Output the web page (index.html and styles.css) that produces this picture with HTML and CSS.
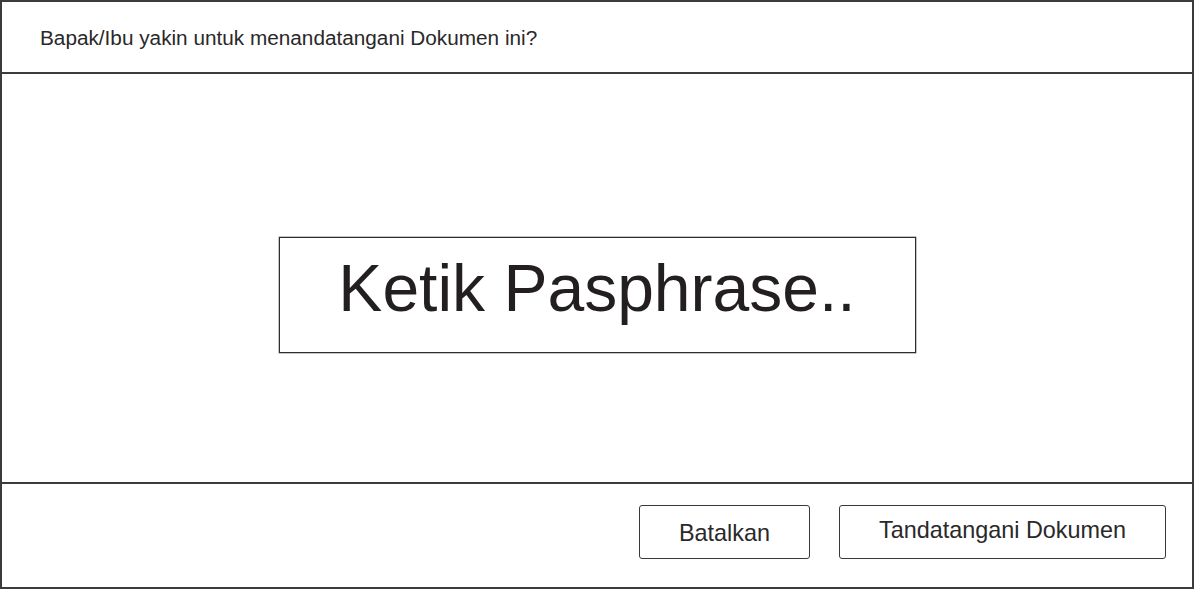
FILE: index.html
```html
<!DOCTYPE html>
<html lang="id">
<head>
<meta charset="utf-8">
<title>Tandatangani Dokumen</title>
<link rel="stylesheet" href="styles.css">
</head>
<body>
<div class="dialog">
  <div class="dialog-header">Bapak/Ibu yakin untuk menandatangani Dokumen ini?</div>
  <div class="dialog-body">
    <div class="pass-box">Ketik Pasphrase..</div>
  </div>
  <div class="dialog-footer">
    <button class="btn btn-cancel">Batalkan</button>
    <button class="btn btn-sign">Tandatangani Dokumen</button>
  </div>
</div>
</body>
</html>
```

FILE: styles.css
```css
html, body {
  margin: 0;
  padding: 0;
  background: #ffffff;
}

body {
  font-family: "Liberation Sans", Arial, sans-serif;
  color: #231f20;
}

.dialog {
  box-sizing: border-box;
  width: 1194px;
  height: 589px;
  border: 2px solid #3c3a3b;
  display: flex;
  flex-direction: column;
}

.dialog-header {
  box-sizing: border-box;
  height: 72px;
  border-bottom: 2px solid #3c3a3b;
  padding-left: 38px;
  display: flex;
  align-items: center;
  padding-top: 2px;
  font-size: 20.75px;
  color: #2a2829;
}

.dialog-body {
  box-sizing: border-box;
  height: 410px;
  border-bottom: 2px solid #3c3a3b;
  display: flex;
  justify-content: center;
  align-items: flex-start;
  padding-top: 163px;
}

.pass-box {
  box-sizing: border-box;
  width: 637px;
  height: 116px;
  border: 1px solid #2e2c2d;
  box-shadow: 0 0 0 0.5px #8a8888;
  display: flex;
  align-items: center;
  justify-content: center;
  padding-bottom: 14px;
  font-size: 66px;
  color: #231f20;
}

.dialog-footer {
  flex: 1;
  display: flex;
  justify-content: flex-end;
  align-items: flex-start;
  padding-top: 21px;
  padding-right: 26px;
  gap: 29px;
}

.btn {
  box-sizing: border-box;
  height: 54px;
  border: 1px solid #3a3839;
  border-radius: 3px;
  background: #ffffff;
  font-family: "Liberation Sans", Arial, sans-serif;
  font-size: 23.4px;
  color: #2a2829;
  display: flex;
  align-items: center;
  justify-content: center;
  padding: 0;
}

.btn-cancel {
  width: 171px;
  padding-top: 3px;
}

.btn-sign {
  width: 327px;
  padding-bottom: 3px;
}
```
